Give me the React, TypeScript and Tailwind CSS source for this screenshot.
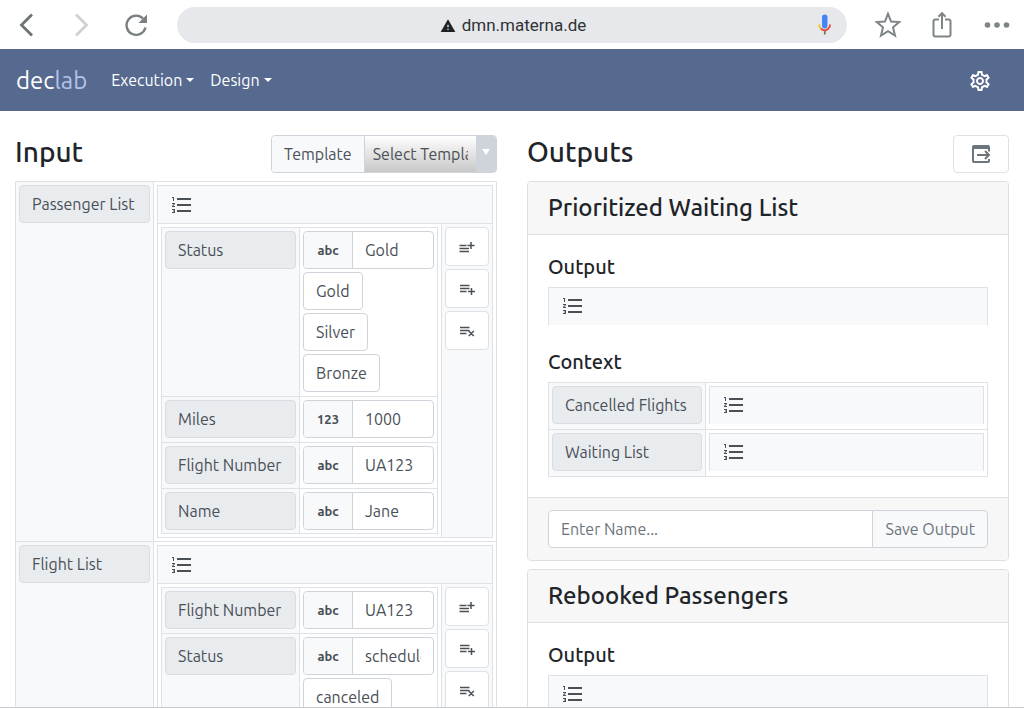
import React from "react";
import { MdFormatListNumbered, MdOutlineSettings, MdWarning } from "react-icons/md";

type Kind = "abc" | "123";
type Field = { name: string; kind: Kind; value: string; options?: string[] };

const passenger: Field[] = [
  { name: "Status", kind: "abc", value: "Gold", options: ["Gold", "Silver", "Bronze"] },
  { name: "Miles", kind: "123", value: "1000" },
  { name: "Flight Number", kind: "abc", value: "UA123" },
  { name: "Name", kind: "abc", value: "Jane" },
];

const flight: Field[] = [
  { name: "Flight Number", kind: "abc", value: "UA123" },
  { name: "Status", kind: "abc", value: "scheduled", options: ["canceled", "scheduled"] },
];

function ListIcon() {
  return <MdFormatListNumbered aria-hidden className="size-6 text-[#495057]" />;
}

type Shape = "above" | "below" | "remove";

const rowIcons: Record<Shape, string> = {
  above: "M.5 4.500H7.500M.5 7.500H10M.5 10.500H10M12 1v7M8.500 4.500h7",
  below: "M1 2.500H10.500M1 5.500H10.500M1 8.500H7.500M12.500 5v7M9 8.500h7",
  remove: "M1 2.500H10.500M1 5.500H10.500M1 8.500H7.500M9.800 6l5 5M14.800 6l-5 5",
};

function RowButton({ shape, label }: { shape: Shape; label: string }) {
  return (
    <button aria-label={label} className="flex h-[39px] w-11 items-center justify-center rounded border border-[#dee2e6] bg-white">
      <svg viewBox="0 0 16 12" className="h-3 w-4" fill="none" stroke="#495057" strokeWidth="1.5" aria-hidden>
        <path d={rowIcons[shape]} />
      </svg>
    </button>
  );
}

function Name({ children }: { children: React.ReactNode }) {
  return (
    <div className="h-[38px] truncate rounded border border-[#d9dde2] bg-[#e9ecef] px-3 text-base leading-9 text-[#495057]">
      {children}
    </div>
  );
}

function FieldRow({ field, prefix }: { field: Field; prefix: string }) {
  const id = `${prefix}-${field.name}`;
  return (
    <tr className="group">
      <th className="border border-[#dee2e6] bg-[#f8f9fb] p-[3px] text-left align-top font-normal">
        <label htmlFor={id}>
          <Name>{field.name}</Name>
        </label>
      </th>
      <td className="border border-[#dee2e6] bg-white p-[3px] pb-1 align-top group-last:pb-[3px]">
        <div className="flex h-[38px] overflow-hidden rounded border border-[#ced4da]">
          <span className="flex w-[49px] shrink-0 items-center justify-center border-r border-[#ced4da] bg-[#f8f9fb] pt-0.5 text-[13px] font-bold text-[#495057]">
            {field.kind}
          </span>
          <span className="flex min-w-0 grow px-3">
            <input id={id} defaultValue={field.value} className="w-full min-w-0 bg-transparent text-base text-[#495057] outline-none" />
          </span>
        </div>
        {field.options && (
          <div className="mt-[3px] flex flex-col items-start gap-[3px]">
            {field.options.map((option) => (
              <button key={option} className="h-[38px] rounded border border-[#ced4da] bg-white px-3 text-base text-[#495057]">
                {option}
              </button>
            ))}
          </div>
        )}
      </td>
    </tr>
  );
}

function InputList({ name, fields }: { name: string; fields: Field[] }) {
  return (
    <tr>
      <th className="w-[138px] border border-[#dee2e6] bg-[#f8f9fb] p-[3px] text-left align-top font-normal">
        <Name>{name}</Name>
      </th>
      <td className="border border-[#dee2e6] p-[3px] align-top">
        <div className="border border-[#dee2e6] bg-[#f8f9fb]">
          <div className="flex h-[38px] items-center border-b border-[#dee2e6] px-3">
            <ListIcon />
          </div>
          <div className="flex">
            <div className="min-w-0 grow border-r border-[#dee2e6] bg-white p-[3px]">
              <table className="w-full table-fixed border-collapse">
                <tbody>
                  {fields.map((field) => (
                    <FieldRow key={field.name} field={field} prefix={name} />
                  ))}
                </tbody>
              </table>
            </div>
            <div className="flex shrink-0 flex-col gap-[3px] p-[3px]">
              <RowButton shape="above" label="Insert entry above" />
              <RowButton shape="below" label="Insert entry below" />
              <RowButton shape="remove" label="Remove entry" />
            </div>
          </div>
        </div>
      </td>
    </tr>
  );
}

function EmptyList() {
  return (
    <div className="flex h-[38px] items-center border border-b-0 border-[#dee2e6] bg-[#f8f9fb] px-3 pb-0.5">
      <ListIcon />
    </div>
  );
}

function OutputCard({ title, context }: { title: string; context: string[] }) {
  return (
    <section className="overflow-hidden rounded border border-[#dfdfdf] bg-white">
      <h3 className="border-b border-[#dfdfdf] bg-[#f7f7f7] px-5 py-3 text-2xl leading-7 font-medium">{title}</h3>
      <div className="p-5">
        <h4 className="mb-2 text-xl leading-6 font-medium">Output</h4>
        <EmptyList />
        <h4 className="mt-[25px] mb-2 text-xl leading-6 font-medium">Context</h4>
        <table className="w-full border-collapse">
          <tbody>
            {context.map((name) => (
              <tr key={name}>
                <th className="w-[157px] border border-[#dee2e6] bg-[#f8f9fb] p-[3px] pb-1 text-left align-top font-normal">
                  <Name>{name}</Name>
                </th>
                <td className="border border-[#dee2e6] p-[3px] pb-[5px] align-top">
                  <EmptyList />
                </td>
              </tr>
            ))}
          </tbody>
        </table>
      </div>
      <div className="flex border-t border-[#dfdfdf] bg-[#f7f7f7] px-5 py-3">
        <input
          aria-label="Output name"
          placeholder="Enter Name..."
          className="h-[38px] min-w-0 grow rounded-l border border-[#ced4da] bg-white px-3 text-base outline-none placeholder:text-[#6c757d]"
        />
        <button className="-ml-px h-[38px] shrink-0 rounded-r border border-[#ced4da] bg-[#f8f9fa] px-3 text-base text-[#6c757d]">
          Save Output
        </button>
      </div>
    </section>
  );
}

function BrowserBar() {
  return (
    <div className="flex h-[49px] items-center bg-white text-[#80868b]">
      <div className="flex w-[177px] shrink-0 items-center gap-[30px] pl-[15px]">
        <button aria-label="Back">
          <svg viewBox="0 0 24 24" className="size-6" fill="none" stroke="#6d7275" strokeWidth="2.8" aria-hidden>
            <path d="M17 1.5L6.500 12L17 22.500" />
          </svg>
        </button>
        <button aria-label="Forward">
          <svg viewBox="0 0 24 24" className="size-6" fill="none" stroke="#cfd1d3" strokeWidth="2.8" aria-hidden>
            <path d="M7 1.500L17.500 12L7 22.500" />
          </svg>
        </button>
        <button aria-label="Reload">
          <svg viewBox="0 0 24 24" className="size-6" fill="none" aria-hidden>
            <path d="M22.500 14.500A9.600 9.600 0 1 1 20 5.500" stroke="#7a7f82" strokeWidth="2.400" />
            <path d="M24 1.500v8.500h-8.500z" fill="#7a7f82" />
          </svg>
        </button>
      </div>
      <div className="flex h-9 grow items-center rounded-full bg-[#e6e8eb] pr-2.5">
        <div className="flex grow items-center justify-center gap-1.5 pt-0.5 pl-9 font-['Roboto',sans-serif] text-[17px] text-[#303336]">
          <MdWarning aria-hidden className="size-4 text-[#202124]" />
          <span>dmn.materna.de</span>
        </div>
        <button aria-label="Voice search">
          <svg viewBox="0 0 24 24" className="size-6" fill="none" aria-hidden>
            <rect x="9" y="1.500" width="5.500" height="14" rx="2.750" fill="#4285f4" />
            <path d="M6.300 11.500c0 2 .7 3.400 1.700 4.400" stroke="#fbbc04" strokeWidth="1.800" />
            <path d="M8 15.700c2 2.200 5.400 2.200 7.300 0 1.200-1.100 1.800-2.600 1.800-4.200" stroke="#ea4335" strokeWidth="1.800" />
            <path d="M11.800 18v3.500" stroke="#6f7a55" strokeWidth="1.800" />
          </svg>
        </button>
      </div>
      <div className="flex w-[177px] shrink-0 items-center justify-between pr-3 pl-[27px]">
        <button aria-label="Bookmark">
          <svg viewBox="0 0 28 28" className="size-7" fill="none" stroke="#7f8487" strokeWidth="2" aria-hidden>
            <path d="M14 2.800L17.100 10.500L25.200 11L19 16.300L21 24.600L14 20.200L7 24.600L9 16.300L2.800 11L10.900 10.500Z" />
          </svg>
        </button>
        <button aria-label="Share">
          <svg viewBox="0 0 28 28" className="size-7" fill="none" stroke="#7f8487" strokeWidth="2" aria-hidden>
            <path d="M10 8.500H6.500a2 2 0 0 0-2 2v13a2 2 0 0 0 2 2h13a2 2 0 0 0 2-2v-13a2 2 0 0 0-2-2H16M13 18V2.500M9.500 5.800L13 2.200l3.500 3.600" />
          </svg>
        </button>
        <button aria-label="More">
          <svg viewBox="0 0 28 28" className="size-7" fill="#7f8487" aria-hidden>
            <circle cx="3.500" cy="14" r="2.800" />
            <circle cx="13" cy="14" r="2.800" />
            <circle cx="22.500" cy="14" r="2.800" />
          </svg>
        </button>
      </div>
    </div>
  );
}

function MenuButton({ children }: { children: React.ReactNode }) {
  return (
    <button className="flex items-center gap-1 text-base text-white">
      {children}
      <span aria-hidden className="border-x-4 border-t-4 border-x-transparent border-t-white" />
    </button>
  );
}

export default function App() {
  return (
    <div className="h-screen overflow-hidden border-b border-[#c8cacc] bg-white font-['Ubuntu','Noto_Sans',sans-serif] text-[#212529]">
      <BrowserBar />
      <nav className="flex h-[62px] items-center bg-[#56698f] px-4">
        <a href="#" className="mr-6 pt-0.5 text-2xl text-white">
          dec<span className="text-[#b4c3e8]">lab</span>
        </a>
        <div className="flex grow gap-4">
          <MenuButton>Execution</MenuButton>
          <MenuButton>Design</MenuButton>
        </div>
        <button aria-label="Settings" className="mr-4 pt-0.5 text-white">
          <MdOutlineSettings className="size-6" />
        </button>
      </nav>
      <main className="grid grid-cols-2 gap-[30px] px-[15px] pt-6">
        <div>
          <div className="mb-2 flex h-[38px] items-start justify-between">
            <h2 className="text-[28px] leading-[34px] font-medium">Input</h2>
            <div className="flex h-[38px] w-[226px] overflow-hidden rounded border border-[#ced4da]">
              <label htmlFor="template" className="shrink-0 border-r border-[#ced4da] bg-[#f8f9fb] px-3 text-base leading-9 text-[#495057]">
                Template
              </label>
              <span className="relative flex min-w-0 grow">
                <select
                  id="template"
                  className="w-full min-w-0 appearance-none bg-linear-to-b from-white to-[#c8c8c8] pr-7 pl-2 text-base text-[#495057] outline-none"
                >
                  <option>Select Template</option>
                </select>
                <span aria-hidden className="pointer-events-none absolute inset-y-0 right-0 flex w-5 items-center justify-center bg-[#ced4da] pb-1">
                  <span className="border-x-4 border-t-[6px] border-x-transparent border-t-white" />
                </span>
              </span>
            </div>
          </div>
          <table className="w-full table-fixed border-collapse">
            <tbody>
              <InputList name="Passenger List" fields={passenger} />
              <InputList name="Flight List" fields={flight} />
            </tbody>
          </table>
        </div>
        <div>
          <div className="mb-2 flex h-[38px] items-start justify-between">
            <h2 className="text-[28px] leading-[34px] font-medium">Outputs</h2>
            <button aria-label="Export outputs" className="flex h-[38px] w-14 items-center justify-center rounded border border-[#dee2e6] bg-white">
              <svg viewBox="0 0 24 24" className="size-6" fill="none" stroke="#6c757d" strokeWidth="2" aria-hidden>
                <path d="M20 9.500V5a1 1 0 0 0-1-1H5a1 1 0 0 0-1 1v14a1 1 0 0 0 1 1h14a1 1 0 0 0 1-1v-2" />
                <path d="M4 5.500h16" strokeWidth="3" />
                <path d="M8 13h12M16 9l4 4l-4 4" />
              </svg>
            </button>
          </div>
          <div className="flex flex-col gap-2">
            <OutputCard title="Prioritized Waiting List" context={["Cancelled Flights", "Waiting List"]} />
            <OutputCard title="Rebooked Passengers" context={["Flight List", "Passenger List"]} />
          </div>
        </div>
      </main>
    </div>
  );
}
